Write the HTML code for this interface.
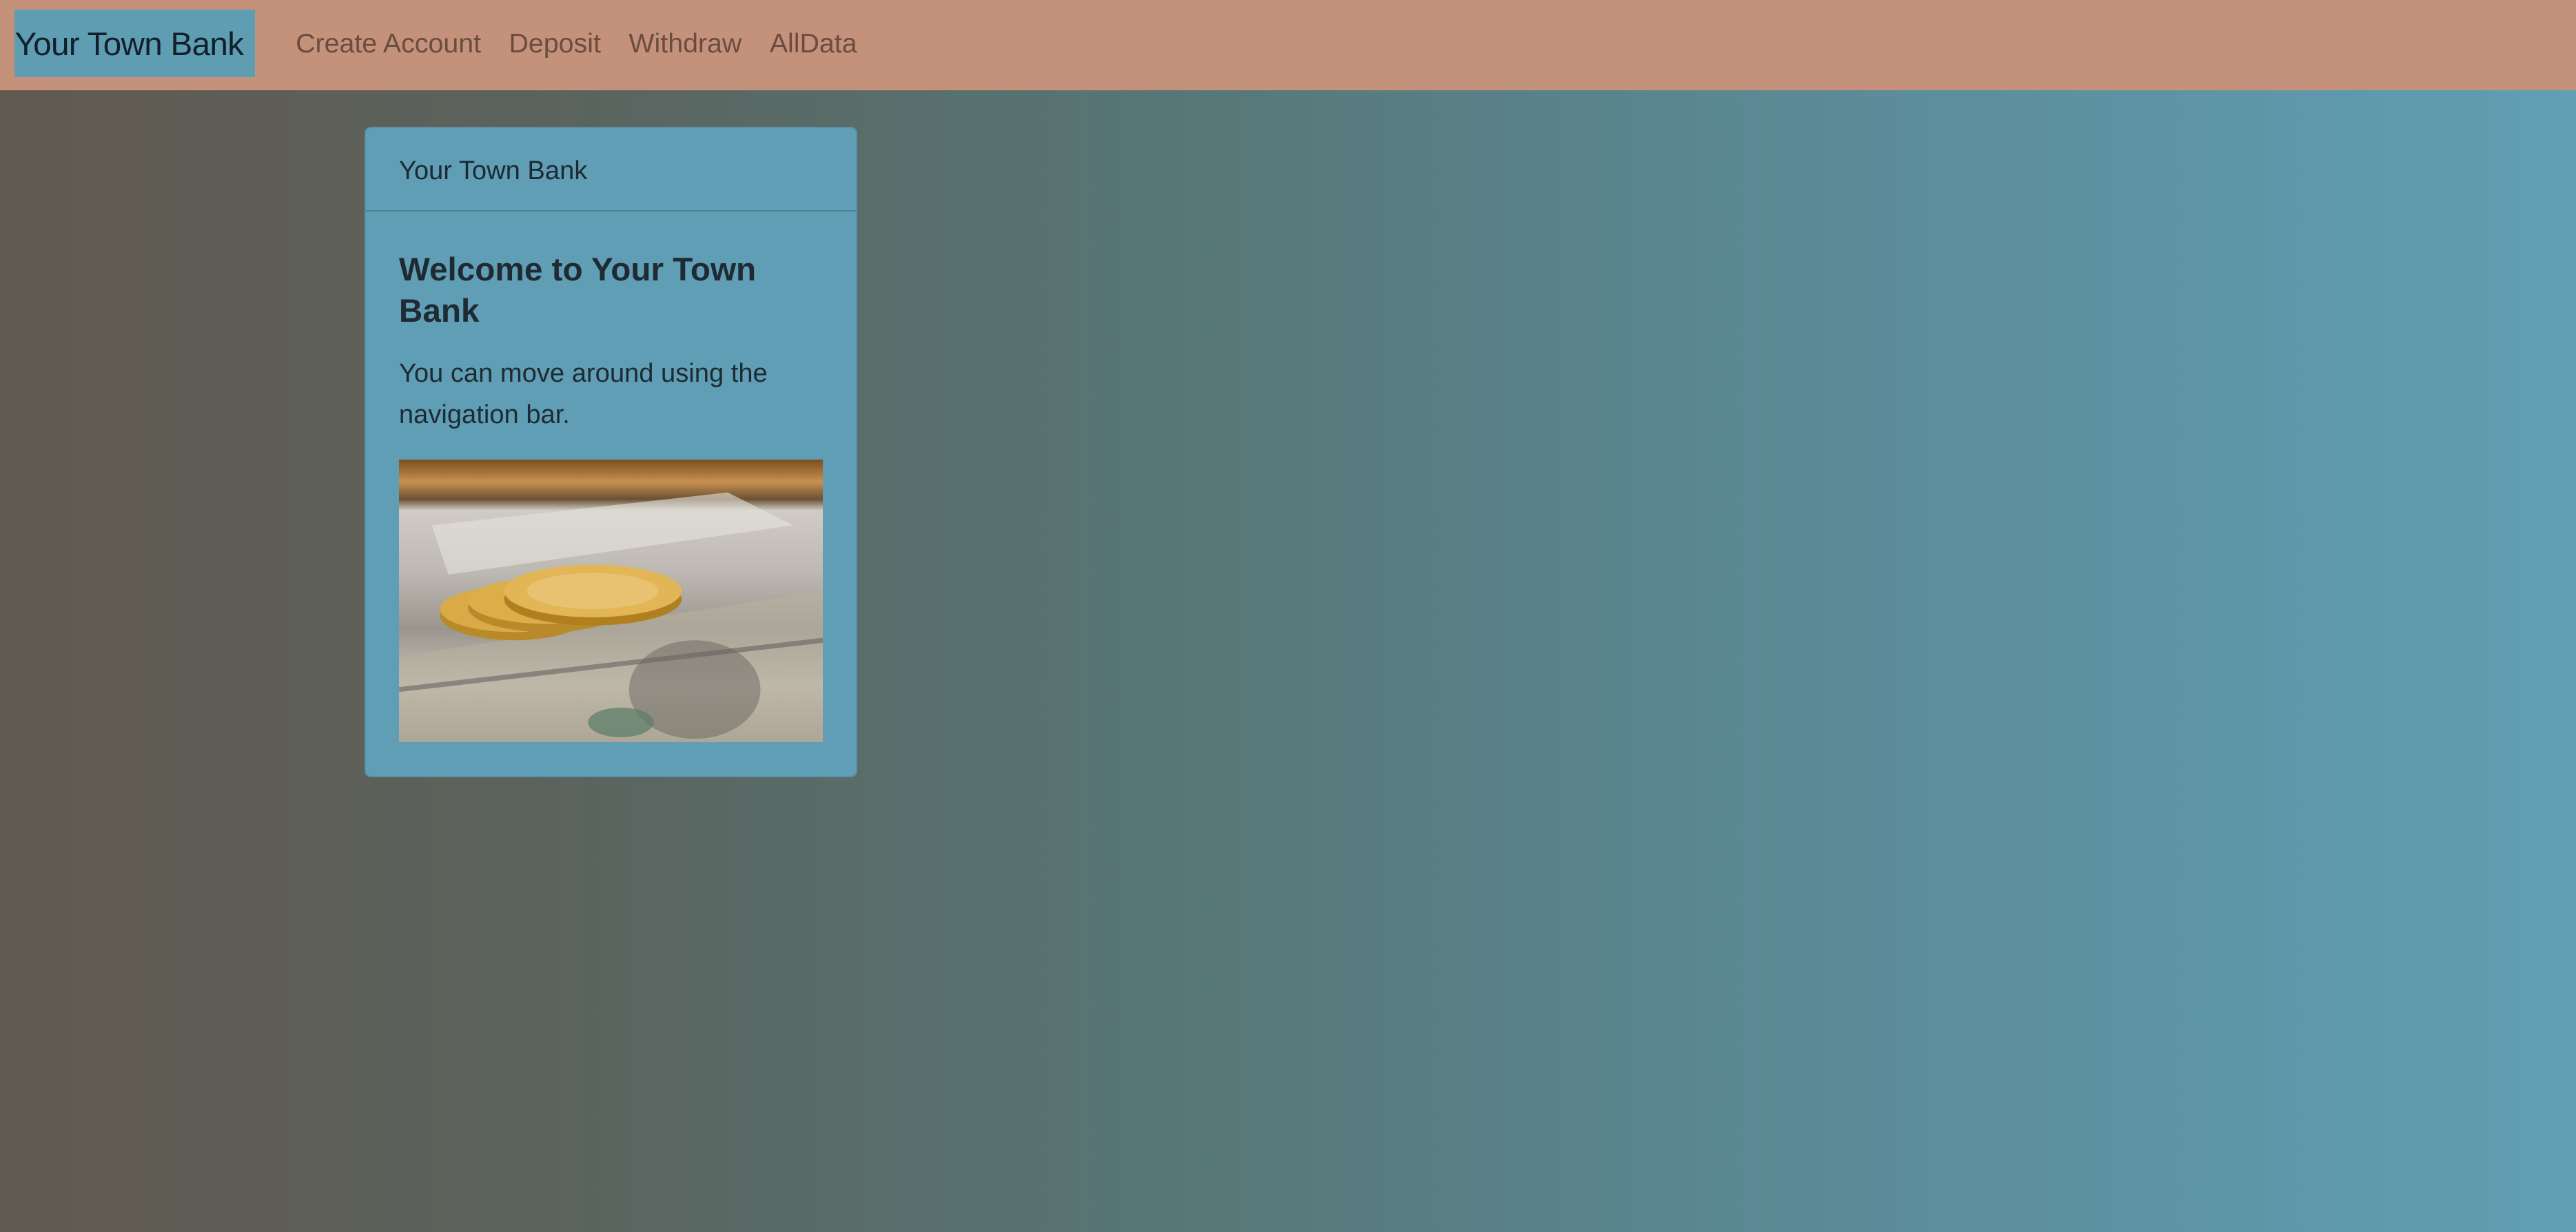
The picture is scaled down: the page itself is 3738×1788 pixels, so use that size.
<!DOCTYPE html>
<html><head><meta charset="utf-8"><style>
html{zoom:2.384}
body{margin:0;width:1568px;height:750px;overflow:hidden;font-family:"Liberation Sans",sans-serif;background:linear-gradient(90deg,#615a51 0%,#5b625c 20%,#577676 45%,#5b8a96 70%,#609fb4 100%);position:relative}
.nav{position:absolute;left:0;top:0;width:1568px;height:55px;background:#c4917a}
.brand{position:absolute;left:9px;top:6px;width:146px;height:41px;background:#5f9db3;color:#13202a;font-size:20px;line-height:43px;white-space:nowrap;letter-spacing:-0.3px}
.links{position:absolute;left:180px;top:17px;font-size:16.5px;color:#6b4d3f;white-space:nowrap}
.links span{margin-right:17px}
.card{position:absolute;left:222px;top:77px;width:300px;height:396px;background:#5f9eb4;border-radius:4px;border:1px solid #5893a8;box-sizing:border-box}
.ch{height:51px;border-bottom:1px solid #4e8499;padding-left:20px;font-size:16px;line-height:52px;color:#1d2a33;box-sizing:border-box}
.title{position:absolute;left:20px;top:74px;width:260px;font-size:20px;font-weight:bold;line-height:25px;color:#1f2a33}
.txt{position:absolute;left:20px;top:137px;width:260px;font-size:16px;line-height:25px;color:#1f2a33}
.img{position:absolute;left:20px;top:202px;width:258px;height:172px;overflow:hidden;background:linear-gradient(180deg,#7a5020 0%,#c89050 8%,#6a5035 14%,#d0ccc5 18%,#bdb9b2 40%,#9a968e 60%,#c8c2b5 80%,#a09888 100%)}
</style></head><body>
<div class="nav"><div class="brand">Your Town Bank</div>
<div class="links"><span>Create Account</span><span>Deposit</span><span>Withdraw</span><span>AllData</span></div></div>
<div class="card"><div class="ch">Your Town Bank</div>
<div class="title">Welcome to Your Town Bank</div>
<div class="txt">You can move around using the navigation bar.</div>
<div class="img"><svg width="258" height="172" viewBox="0 0 258 172">
<path d="M0 120 L258 80 L258 172 L0 172Z" fill="#b8b0a0" opacity=".6"/>
<path d="M0 140 L258 110" stroke="#555" stroke-width="3" opacity=".5"/>
<path d="M20 40 L200 20 L240 40 L30 70Z" fill="#e5e2dc" opacity=".6"/>
<ellipse cx="180" cy="140" rx="40" ry="30" fill="#6a6660" opacity=".5"/>
<ellipse cx="70" cy="95" rx="45" ry="15" fill="#b98a2a"/>
<ellipse cx="70" cy="91" rx="45" ry="14" fill="#d9ab48"/>
<ellipse cx="90" cy="90" rx="48" ry="15" fill="#b98a2a"/>
<ellipse cx="90" cy="86" rx="48" ry="14" fill="#dcae4a"/>
<ellipse cx="118" cy="85" rx="54" ry="16" fill="#b08020"/>
<ellipse cx="118" cy="80" rx="54" ry="16" fill="#e2b656"/>
<ellipse cx="118" cy="80" rx="40" ry="11" fill="#e8c270"/>
<ellipse cx="135" cy="160" rx="20" ry="9" fill="#587c66" opacity=".7"/>
</svg></div>
</div>
</body></html>
